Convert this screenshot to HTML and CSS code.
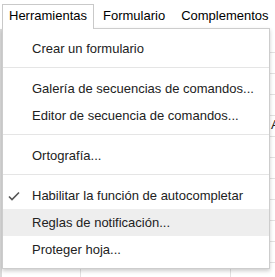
FILE: index.html
```html
<!DOCTYPE html>
<html lang="es">
<head>
  <meta charset="UTF-8" />
  <meta name="viewport" content="width=device-width, initial-scale=1" />
  <title>Herramientas</title>
  <link rel="stylesheet" href="styles.css">
</head>
<body>

<div class="menubar">
  <div class="tab tab-open">Herramientas</div>
  <div class="tab">Formulario</div>
  <div class="tab">Complementos</div>
</div>

<div class="sheet">
  <span class="cell-a">A</span>
</div>

<div class="menu">
  <div class="item">Crear un formulario</div>
  <div class="sep"></div>
  <div class="item">Galería de secuencias de comandos...</div>
  <div class="item">Editor de secuencia de comandos...</div>
  <div class="sep"></div>
  <div class="item">Ortografía...</div>
  <div class="sep"></div>
  <div class="item checked">
    <svg class="check" width="12" height="10" viewBox="0 0 12 10">
      <path d="M1 5.5 L4 8.5 L11 1.5" fill="none" stroke="#555" stroke-width="1.6"/>
    </svg>
    Habilitar la función de autocompletar
  </div>
  <div class="item hover">Reglas de notificación...</div>
  <div class="item">Proteger hoja...</div>
</div>

</body>
</html>
```

FILE: styles.css
```css
body {
  font-family: "Liberation Sans", Arial, sans-serif;
  font-size: 13px;
  background: #fff;
  color: #000;
  margin: 0;
  height: 277px;
  overflow: hidden;
  position: relative;
}
.menubar {
  display: flex;
  gap: 2px;
  padding: 4px 0 0 2px;
}
.tab {
  line-height: 15px;
  padding: 3px 6px 6px;
  border: 1px solid transparent;
  border-bottom: none;
  white-space: nowrap;
}
.tab-open {
  position: relative;
  z-index: 2;
  background: #fff;
  border-color: #c9c9c9;
}
.sheet {
  position: relative;
  height: 250px;
  border-left: 2px solid #dadada;
  background-image:
    linear-gradient(#e2e2e2, #e2e2e2),
    linear-gradient(#e2e2e2, #e2e2e2),
    repeating-linear-gradient(to bottom, transparent 0, transparent 20px, #e2e2e2 20px, #e2e2e2 21px);
  background-size: 1px 100%, 1px 100%, 100% 100%;
  background-position: 78px 0, 228px 0, 0 3px;
  background-repeat: no-repeat, no-repeat, repeat;
}
.cell-a {
  position: absolute;
  left: 269px;
  top: 88px;
  font-size: 13px;
  color: #222;
}
.menu {
  position: absolute;
  top: 28px;
  left: 2px;
  width: 268px;
  box-sizing: border-box;
  padding: 6px 0 5px;
  background: #fff;
  border: 1px solid #cdcdcd;
  box-shadow: 0 2px 4px rgba(0, 0, 0, 0.2);
  z-index: 1;
  color: #222;
}
.item {
  position: relative;
  line-height: 15px;
  padding: 6px 0 6px 29px;
  white-space: nowrap;
}
.item.hover {
  background: #eeeeee;
}
.check {
  position: absolute;
  left: 5px;
  top: 9px;
}
.sep {
  border-top: 1px solid #e5e5e5;
  margin: 5px 0 7px;
}
```
